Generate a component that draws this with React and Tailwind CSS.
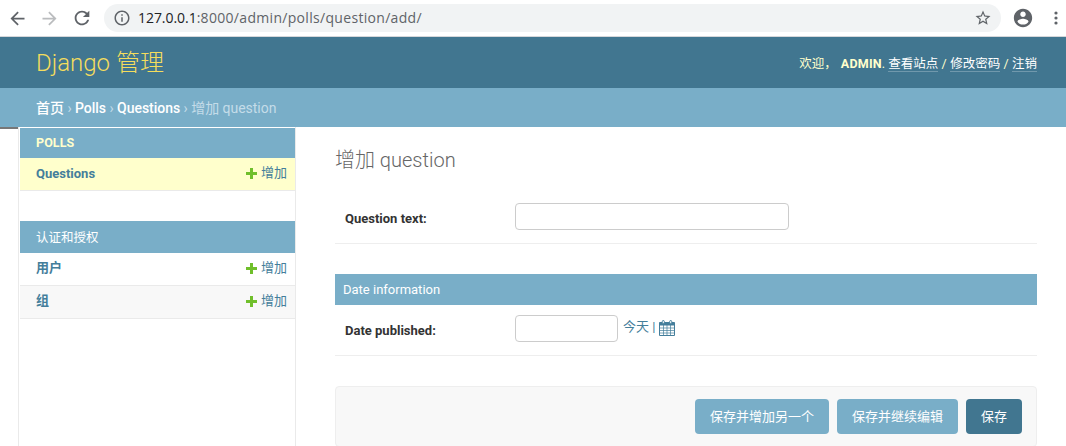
import React from "react";

const Icon = ({ d, className }) => (
  <svg viewBox="0 0 24 24" fill="currentColor" className={`shrink-0 ${className}`}>
    <path d={d} />
  </svg>
);

const BACK = "M20 11H7.83l5.59-5.59L12 4l-8 8 8 8 1.41-1.41L7.83 13H20v-2z";
const FORWARD = "M12 4l-1.41 1.41L16.17 11H4v2h12.17l-5.58 5.59L12 20l8-8z";
const RELOAD =
  "M17.65 6.35C16.2 4.9 14.21 4 12 4c-4.42 0-7.99 3.58-7.99 8s3.57 8 7.99 8c3.73 0 6.84-2.55 7.73-6h-2.08c-.82 2.33-3.04 4-5.65 4-3.31 0-6-2.69-6-6s2.69-6 6-6c1.66 0 3.14.69 4.22 1.78L13 11h7V4l-2.35 2.35z";
const INFO =
  "M11 7h2v2h-2zm0 4h2v6h-2zm1-9C6.48 2 2 6.48 2 12s4.48 10 10 10 10-4.48 10-10S17.52 2 12 2zm0 18c-4.41 0-8-3.59-8-8s3.59-8 8-8 8 3.59 8 8-3.59 8-8 8z";
const STAR =
  "M22 9.24l-7.19-.62L12 2 9.19 8.63 2 9.24l5.46 4.73L5.82 21 12 17.27 18.18 21l-1.63-7.03L22 9.24zM12 15.4l-3.76 2.27 1-4.28-3.32-2.88 4.38-.38L12 6.1l1.71 4.04 4.38.38-3.32 2.88 1 4.28L12 15.4z";
const ACCOUNT =
  "M12 2C6.48 2 2 6.48 2 12s4.48 10 10 10 10-4.48 10-10S17.52 2 12 2zm0 3c1.66 0 3 1.34 3 3s-1.34 3-3 3-3-1.34-3-3 1.34-3 3-3zm0 14.2c-2.5 0-4.71-1.28-6-3.22.03-1.99 4-3.08 6-3.08 1.99 0 5.97 1.09 6 3.08-1.29 1.94-3.5 3.22-6 3.22z";

const BrowserBar = () => (
  <div className="flex h-[37px] items-center border-b border-[#d5d7da] bg-white text-[#5f6368]">
    <Icon d={BACK} className="ml-[7px] size-[21px]" />
    <Icon d={FORWARD} className="ml-[11px] size-[21px] text-[#babcbe]" />
    <Icon d={RELOAD} className="ml-[11px] size-[22px]" />
    <div className="ml-[11px] flex h-7 w-[897px] items-center rounded-full bg-[#f1f3f4] pl-[9px] pr-[9px]">
      <Icon d={INFO} className="size-[18px]" />
      <span className="ml-[7px] grow whitespace-nowrap font-['Open_Sans','Noto_Sans',sans-serif] text-[14px] leading-7 tracking-[0.31px]">
        <span className="tracking-[-0.05px] text-[#202124]">127.0.0.1</span>:8000/admin/polls/question/add/
      </span>
      <Icon d={STAR} className="size-[18px]" />
    </div>
    <Icon d={ACCOUNT} className="ml-[11px] size-[22px]" />
    <svg viewBox="0 0 4 14" fill="currentColor" className="ml-[20px] h-[14px] w-1 shrink-0">
      <circle cx="2" cy="2" r="1.6" />
      <circle cx="2" cy="7" r="1.6" />
      <circle cx="2" cy="12" r="1.6" />
    </svg>
  </div>
);

const ToolLink = ({ children }) => (
  <a className="border-b border-white/25 pt-px leading-[14px] text-white">{children}</a>
);

const Header = () => (
  <header className="flex h-[51px] items-center justify-between bg-[#417690] pl-9 pr-[29px] text-[#ffc]">
    <h1 className="pt-[2px] text-[24px] font-light leading-[49px] text-[#f5dd5d]">Django 管理</h1>
    <div className="flex items-center whitespace-pre pt-[2px] text-[12.5px] leading-[14px]">
      <span className="mr-px">欢迎， </span>
      <strong className="text-[12.5px] font-bold tracking-[0.2px]">ADMIN</strong>
      <span>. </span>
      <ToolLink>查看站点</ToolLink>
      <span className="tracking-[0.25px]"> / </span>
      <ToolLink>修改密码</ToolLink>
      <span className="tracking-[0.1px]"> / </span>
      <ToolLink>注销</ToolLink>
    </div>
  </header>
);

const Breadcrumbs = () => (
  <nav className="h-[39px] whitespace-pre bg-[#79aec8] pl-9 text-[14px] leading-10 tracking-[-0.03px] text-[#c4dce8]">
    <a className="font-medium text-white">首页</a> ›{" "}
    <a className="font-medium text-white">Polls</a> ›{" "}
    <a className="font-medium text-white">Questions</a> › 增加 question
  </nav>
);

const ModelRow = ({ name, lineHeight = "leading-[30px]", className = "" }) => (
  <div className={`flex h-[33px] items-start border-b border-[#eaeaea] pl-4 pr-2 text-[13px] text-[#447e9b] ${className}`}>
    <a className={`grow font-bold ${lineHeight}`}>{name}</a>
    <svg viewBox="0 0 11 11" className="mr-1 mt-[10px] size-[11px]">
      <path d="M4 0h3v4h4v3H7v4H4V7H0V4h4z" fill="#70bf2b" />
    </svg>
    <a className="leading-[30px]">增加</a>
  </div>
);

const Sidebar = () => (
  <aside className="h-[319px] w-[278px] shrink-0 border-x border-[#eaeaea] bg-white pl-px pt-px">
    <h2 className="h-[30px] bg-[#79aec8] pl-4 text-[12.5px] font-bold leading-[30px] tracking-[0.1px] text-[#ffc]">POLLS</h2>
    <ModelRow name="Questions" lineHeight="leading-8" className="bg-[#ffc]" />
    <h2 className="mt-[30px] h-8 bg-[#79aec8] pl-4 text-[12.5px] leading-[34px] text-white">认证和授权</h2>
    <ModelRow name="用户" />
    <ModelRow name="组" className="bg-[#f8f8f8]" />
  </aside>
);

const FieldRow = ({ label, children, className }) => (
  <div className={`flex items-start border-b border-[#eee] pl-[10px] ${className}`}>
    <label className="w-[170px] pt-2 text-[13px] font-bold leading-4 text-[#333]">{label}</label>
    {children}
  </div>
);

const Calendar = () => (
  <svg viewBox="0 0 16 16" className="ml-1 mt-px size-4" fill="none" stroke="#447e9b">
    <path d="M.5 3.5h15v12H.5z" />
    <path d="M.5 2.5h15v2.5H.5z" fill="#447e9b" />
    <path d="M.5 8h15M.5 10.5h15M.5 13h15M4.5 5v10.5M8 5v10.5M11.5 5v10.5" strokeWidth=".7" />
    <rect x="3.3" y=".5" width="2" height="3.2" rx="1" fill="#fff" />
    <rect x="10.7" y=".5" width="2" height="3.2" rx="1" fill="#fff" />
  </svg>
);

const SubmitButton = ({ children, className }) => (
  <button className={`h-[35px] rounded text-[13px] leading-[35px] text-white ${className}`}>{children}</button>
);

const Content = () => (
  <main className="ml-[39px] w-[702px] shrink-0">
    <h1 className="mt-5 h-[26px] text-[20px] font-light leading-[26px] text-[#666]">增加 question</h1>
    <FieldRow label="Question text:" className="mt-[30px] h-[41px]">
      <input className="h-[27px] w-[274px] rounded border border-[#ccc]" />
    </FieldRow>
    <h2 className="mt-[30px] h-[31px] bg-[#79aec8] pl-2 text-[13px] leading-[31px] text-white">Date information</h2>
    <FieldRow label="Date published:" className="h-[51px] pt-[10px]">
      <input className="h-[27px] w-[103px] rounded border border-[#ccc]" />
      <div className="ml-[5px] flex items-start pt-1 text-[13px] leading-4 text-[#447e9b]">
        <span className="whitespace-pre">今天 |</span>
        <Calendar />
      </div>
    </FieldRow>
    <div className="mt-[30px] flex h-[61px] justify-end gap-2 rounded border border-[#eee] bg-[#f8f8f8] pr-[14px] pt-3">
      <SubmitButton className="w-[134px] bg-[#79aec8]">保存并增加另一个</SubmitButton>
      <SubmitButton className="w-[121px] bg-[#79aec8]">保存并继续编辑</SubmitButton>
      <SubmitButton className="w-[56px] bg-[#417690]">保存</SubmitButton>
    </div>
  </main>
);

export default function App() {
  return (
    <div className="h-[446px] w-[1066px] overflow-hidden bg-white font-['Roboto','Noto_Sans_CJK_SC',sans-serif]">
      <BrowserBar />
      <Header />
      <Breadcrumbs />
      <div className="flex items-start">
        <div className="h-[2px] w-[18px] shrink-0 bg-[#777]" />
        <Sidebar />
        <Content />
      </div>
    </div>
  );
}
